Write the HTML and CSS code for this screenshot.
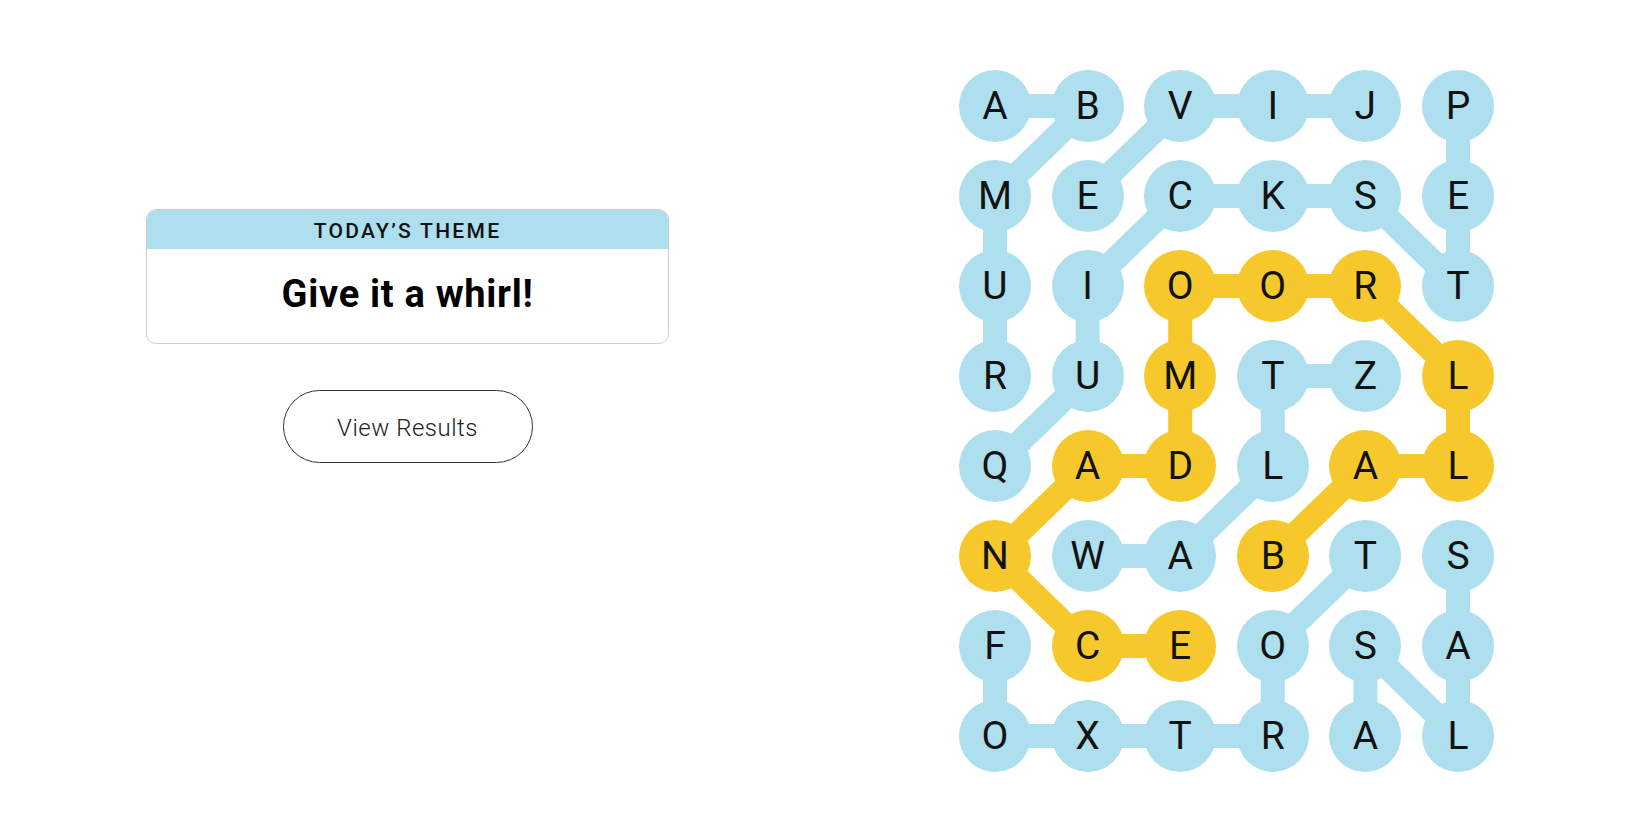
FILE: index.html
```html
<!DOCTYPE html>
<html lang="en">
<head>
<meta charset="utf-8">
<title>Strands</title>
<link rel="stylesheet" href="styles.css">
</head>
<body>
<main class="page">
  <section class="left">
    <div class="theme-card">
      <div class="theme-head">TODAY’S THEME</div>
      <div class="theme-body">Give it a whirl!</div>
    </div>
    <button class="results-btn">View Results</button>
  </section>
  <section class="board">
    <svg class="links" viewBox="0 0 535 702" width="535" height="702">
      <g fill="none" stroke-width="24" stroke-linecap="round" stroke-linejoin="round">
        <polyline class="blue" points="36,306 36,216 36,126 128.6,36 36,36"/>
        <polyline class="blue" points="36,396 128.6,306 128.6,216 221.2,126 313.8,126 406.4,126 499,216 499,126 499,36"/>
        <polyline class="blue" points="406.4,36 313.8,36 221.2,36 128.6,126"/>
        <polyline class="blue" points="128.6,486 221.2,486 313.8,396 313.8,306 406.4,306"/>
        <polyline class="blue" points="36,576 36,666 128.6,666 221.2,666 313.8,666 313.8,576 406.4,486"/>
        <polyline class="blue" points="499,486 499,576 499,666 406.4,576 406.4,666"/>
        <polyline class="gold" points="313.8,486 406.4,396 499,396 499,306 406.4,216 313.8,216 221.2,216 221.2,306 221.2,396 128.6,396 36,486 128.6,576 221.2,576"/>
      </g>
    </svg>
    <div class="cells">
      <div class="cell">A</div><div class="cell">B</div><div class="cell">V</div><div class="cell">I</div><div class="cell">J</div><div class="cell">P</div>
      <div class="cell">M</div><div class="cell">E</div><div class="cell">C</div><div class="cell">K</div><div class="cell">S</div><div class="cell">E</div>
      <div class="cell">U</div><div class="cell">I</div><div class="cell gold">O</div><div class="cell gold">O</div><div class="cell gold">R</div><div class="cell">T</div>
      <div class="cell">R</div><div class="cell">U</div><div class="cell gold">M</div><div class="cell">T</div><div class="cell">Z</div><div class="cell gold">L</div>
      <div class="cell">Q</div><div class="cell gold">A</div><div class="cell gold">D</div><div class="cell">L</div><div class="cell gold">A</div><div class="cell gold">L</div>
      <div class="cell gold">N</div><div class="cell">W</div><div class="cell">A</div><div class="cell gold">B</div><div class="cell">T</div><div class="cell">S</div>
      <div class="cell">F</div><div class="cell gold">C</div><div class="cell gold">E</div><div class="cell">O</div><div class="cell">S</div><div class="cell">A</div>
      <div class="cell">O</div><div class="cell">X</div><div class="cell">T</div><div class="cell">R</div><div class="cell">A</div><div class="cell">L</div>
    </div>
  </section>
</main>
</body>
</html>
```

FILE: styles.css
```css
html, body {
  margin: 0;
  padding: 0;
  background: #ffffff;
}

body {
  font-family: "Roboto", "Liberation Sans", Arial, sans-serif;
  color: #000;
}

.page {
  display: flex;
  width: 1650px;
  height: 825px;
}

.left {
  width: 815px;
  display: flex;
  flex-direction: column;
  align-items: center;
  padding-top: 209px;
  box-sizing: border-box;
}

.theme-card {
  width: 523px;
  height: 135px;
  box-sizing: border-box;
  border: 1px solid #cfcfcf;
  border-radius: 10px;
  overflow: hidden;
  display: flex;
  flex-direction: column;
}

.theme-head {
  background: #aedfee;
  height: 39px;
  display: flex;
  align-items: center;
  justify-content: center;
  font-size: 21px;
  font-weight: 500;
  letter-spacing: 2.3px;
  color: #121212;
  padding-top: 3px;
  box-sizing: border-box;
}

.theme-body {
  flex: 1;
  display: flex;
  align-items: center;
  justify-content: center;
  font-size: 38px;
  font-weight: 700;
  letter-spacing: 0.7px;
  padding-bottom: 4px;
  color: #000;
}

.results-btn {
  margin-top: 46px;
  width: 250px;
  height: 73px;
  border: 1px solid #333;
  border-radius: 37px;
  background: #fff;
  font-family: "Roboto", "Liberation Sans", Arial, sans-serif;
  font-size: 24px;
  font-weight: 300;
  letter-spacing: 0.5px;
  color: #222;
  padding: 3px 0 0 0;
}

.board {
  position: relative;
  margin-left: 144px;
  margin-top: 70px;
  width: 535px;
  height: 702px;
}

.links {
  position: absolute;
  left: 0;
  top: 0;
  z-index: 0;
}

.links .blue { stroke: #aedfee; }
.links .gold { stroke: #f6c82c; }

.cells {
  position: relative;
  z-index: 1;
  display: grid;
  grid-template-columns: repeat(6, 72px);
  grid-auto-rows: 72px;
  column-gap: 20.6px;
  row-gap: 18px;
}

.cell {
  width: 72px;
  height: 72px;
  border-radius: 50%;
  background: #aedfee;
  display: flex;
  align-items: center;
  justify-content: center;
  font-size: 39px;
  font-weight: 400;
  color: #121212;
  line-height: 1;
}

.cell.gold {
  background: #f6c82c;
}
```
